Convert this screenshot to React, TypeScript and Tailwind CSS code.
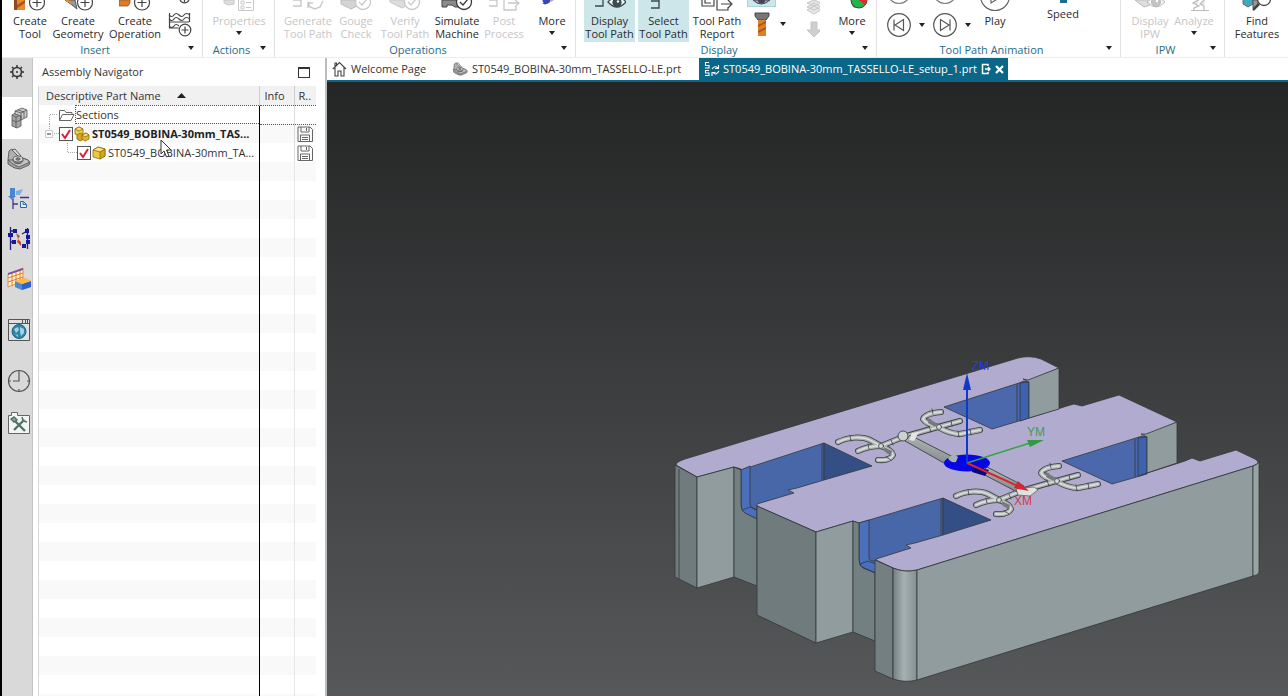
import { useState, type ReactNode } from 'react'
import clsx from 'clsx'

/* ---------- ribbon ---------- */

function Caret() {
  return (
    <svg width="6" height="4" viewBox="0 0 6 4" aria-hidden="true">
      <path d="M0 0h6L3 4z" fill="#222" />
    </svg>
  )
}

type ToolProps = {
  label: string[]
  className: string
  icon?: ReactNode
  disabled?: boolean
  active?: boolean
  caret?: boolean
}

function Tool({ label, className, icon, disabled, active, caret }: ToolProps) {
  return (
    <button
      type="button"
      disabled={disabled}
      className={clsx(
        'flex h-[42px] shrink-0 flex-col items-center text-[11px] leading-[13px] whitespace-nowrap',
        disabled ? 'text-[#c6c6c6]' : 'text-[#2b2b2b]',
        active && 'bg-[#cce6ea]',
        className,
      )}
    >
      <span className="flex h-[14px] items-start">{icon}</span>
      {label.map(l => (
        <span key={l}>{l}</span>
      ))}
      {caret && (
        <span className="flex h-[11px] items-center">
          <Caret />
        </span>
      )}
    </button>
  )
}

function Group({ title, className, children }: { title: string; className: string; children: ReactNode }) {
  return (
    <section className={clsx('flex shrink-0 flex-col border-r border-[#e2e2e2]', className)}>
      <div className="flex h-[43px] items-start">{children}</div>
      <div className="flex h-[14px] items-center">
        <span className="flex-1 text-center text-[11px] leading-[14px] text-[#1f6c86]">{title}</span>
        <button type="button" aria-label={`${title} options`} className="flex h-2 w-[14px] items-start">
          <Caret />
        </button>
      </div>
    </section>
  )
}

const PlusBadge = ({ x }: { x: number }) => (
  <g stroke="#444" fill="#fff" strokeWidth="1.2">
    <circle cx={x} cy="2.5" r="7.5" />
    <path d={`M${x - 4.5} 2.5h9M${x} -2v9`} />
  </g>
)

const CheckBadge = ({ x, color }: { x: number; color: string }) => (
  <g stroke={color} fill="#fff" strokeWidth="1.3">
    <circle cx={x} cy="2" r="7.5" />
    <path d={`M${x - 4} 2l3 3 5-6`} fill="none" />
  </g>
)

const icons = {
  createTool: (
    <svg width="32" height="12">
      <path d="M0 0h11v10H0z" fill="#e8892b" />
      <path d="M0 7l11-7v3L0 10z" fill="#a8541a" />
      <path d="M0 0h3v10H0z" fill="#8d4a1c" />
      <PlusBadge x={23} />
    </svg>
  ),
  createGeometry: (
    <svg width="32" height="12">
      <path d="M3 0h10l2 9-5-4z" fill="#999" stroke="#555" />
      <path d="M3 0h4l3 5z" fill="#e8892b" />
      <PlusBadge x={23} />
    </svg>
  ),
  createOperation: (
    <svg width="32" height="12">
      <path d="M0 0h11v3L9 6H0z" fill="#dd7a26" stroke="#8a5a30" strokeWidth=".8" />
      <PlusBadge x={23} />
    </svg>
  ),
  properties: (
    <svg width="32" height="12" fill="none" stroke="#c8c8c8">
      <path d="M1 0v3l4 2 6-1V0z" fill="#ddd" />
      <path d="M15.500 0v10.500h15V0M18 1h3v3h-3zM18 6h3v3h-3zM23 2.500h5M23 7.500h5" />
    </svg>
  ),
  generate: (
    <svg width="32" height="12" fill="none" stroke="#c8c8c8" strokeWidth="1.400">
      <path d="M1 0h8v6H1M16 2l2 5 5 2 5-2 3-6M16 8V3h5" />
    </svg>
  ),
  gouge: (
    <svg width="32" height="12">
      <path d="M1 0v4l10 5 6-3V0z" fill="#d4d4d4" stroke="#bbb" />
      <CheckBadge x={23} color="#c8c8c8" />
    </svg>
  ),
  verify: (
    <svg width="32" height="12">
      <path d="M1 0v2l12 6 6-3V0z" fill="#ddd" stroke="#c8c8c8" />
      <CheckBadge x={23} color="#c8c8c8" />
    </svg>
  ),
  simulate: (
    <svg width="32" height="12">
      <path d="M1 0v7h5V5h5l3 2h5V0z" fill="#8c8c8c" stroke="#444" />
      <CheckBadge x={23} color="#3a3a3a" />
    </svg>
  ),
  post: (
    <svg width="32" height="12" fill="none" stroke="#c8c8c8" strokeWidth="1.300">
      <path d="M1 0h8v6H1M16 0v10h12V7M20 3h10M27 0l4 3-4 4" />
    </svg>
  ),
  wrench: (
    <svg width="32" height="14">
      <path d="M12 -2v3l-2 2H6l3 1.500 4-1.500 3-4z" fill="#2c3da8" />
      <circle cx="10" cy="0" r="3.500" fill="#3949b4" />
      <path d="M13 -1l8-1-6 4z" fill="#aab" />
    </svg>
  ),
  displayPath: (
    <svg width="32" height="12" fill="none" stroke="#3c4a50" strokeWidth="1.300">
      <path d="M1 -1h8v7H1" />
      <path d="M14 2q9-10 18 0q-9 10-18 0z" fill="#eef7f8" />
      <circle cx="23" cy="2.500" r="4" fill="#3c4a50" />
      <circle cx="24" cy="1.500" r="1.200" fill="#fff" stroke="none" />
    </svg>
  ),
  selectPath: (
    <svg width="32" height="12" fill="none" stroke="#3c4a50" strokeWidth="1.400">
      <path d="M11 -1v2H3M3 1h8v7H3" />
    </svg>
  ),
  report: (
    <svg width="32" height="12" fill="none" stroke="#444" strokeWidth="1.200">
      <path d="M1 0v6h12V0M4 0v3h6M16 0v10h11V7M20 4h10M27 0l4 4-4 4" />
    </svg>
  ),
  pie: (
    <svg width="32" height="14">
      <path d="M23 0L15 1a8.200 8.200 0 0 0 4 7z" fill="#3a4a50" />
      <circle cx="23" cy="0" r="8" fill="#24b24a" stroke="#444" />
      <path d="M23 0v-8h8q2 6-2 13z" fill="#e22c2c" />
    </svg>
  ),
  play: (
    <svg width="32" height="12" fill="none" stroke="#666" strokeWidth="1.200">
      <circle cx="16" cy="-4" r="14.500" />
      <path d="M12 -6v9l11-7" />
    </svg>
  ),
  ipw: (
    <svg width="32" height="12" stroke="#bbb" fill="none">
      <path d="M1 0l9 7 6-2V0z" fill="#ddd" />
      <path d="M13 2q9-9 18 0q-9 10-18 0z" fill="#f4f4f4" />
      <circle cx="22" cy="2" r="4.500" fill="#c4c4c4" />
      <circle cx="23" cy="1" r="1.200" fill="#fff" stroke="none" />
    </svg>
  ),
  analyze: (
    <svg width="32" height="12" stroke="#bbb" fill="#e6e6e6" strokeWidth="1.200">
      <path d="M13 10.500h18M16 10V8l5-2-6-3 7-4M26 10V6l-4-2 5-5" />
    </svg>
  ),
  find: (
    <svg width="32" height="12">
      <path d="M2 -2v6l5 3 5-3v-6z" fill="#41a9bd" stroke="#667" />
      <path d="M12 0v8l5-2V0z" fill="#999" stroke="#555" />
      <path d="M18 4l-6 6" stroke="#444" strokeWidth="2.500" />
      <circle cx="23" cy="-1" r="6.500" fill="#fff" stroke="#444" strokeWidth="1.300" />
    </svg>
  ),
}

function StepButton({ forward }: { forward?: boolean }) {
  return (
    <div className="flex w-[46px] flex-col">
      <svg width="24" height="5" fill="none" stroke="#777" strokeWidth="1.200" aria-hidden="true">
        <circle cx="12" cy="-8" r="11.500" />
      </svg>
      <div className="mt-2 flex items-center">
        <button type="button" aria-label={forward ? 'Step forward' : 'Step backward'}>
          <svg width="24" height="24" fill="none" stroke="#555" strokeWidth="1.200" className={forward ? '' : 'rotate-180'}>
            <circle cx="12" cy="12" r="11.300" />
            <path d="M7.500 6.500v11l8.500-5.500zM17 6.500v11" />
          </svg>
        </button>
        <button type="button" aria-label="Step options" className="flex w-[22px] justify-center">
          <Caret />
        </button>
      </div>
    </div>
  )
}

function Ribbon() {
  return (
    <header className="flex h-[58px] shrink-0 overflow-hidden border-b border-[#ececec] bg-white">
      <Group title="Insert" className="w-[201px]">
        <Tool className="ml-2 w-10" label={['Create', 'Tool']} icon={icons.createTool} />
        <Tool className="w-14" label={['Create', 'Geometry']} icon={icons.createGeometry} />
        <Tool className="w-[58px]" label={['Create', 'Operation']} icon={icons.createOperation} />
        <button type="button" aria-label="Create method" className="ml-1">
          <svg width="24" height="38" fill="none" stroke="#444" strokeWidth="1.200">
            <path d="M12 0a5 5 0 0 0 9 0M16.500 0v2" />
            <path d="M1.500 13v9M21.500 13v9M1 15q3 3 5 0t5 0t5 0t6 0M1 19q3 3 5 0t5 0t5 0t6 0M1 22h20M1.500 22v6h9M1 26q3 3 5 0t5 0" />
            <circle cx="17" cy="30" r="5.800" fill="#fff" />
            <path d="M13.500 30h7M17 26.500v7" />
          </svg>
        </button>
      </Group>
      <Group title="Actions" className="w-[72px]">
        <Tool className="w-[72px]" label={['Properties']} icon={icons.properties} disabled caret />
      </Group>
      <Group title="Operations" className="w-[301px]">
        <Tool className="ml-[9px] w-12" label={['Generate', 'Tool Path']} icon={icons.generate} disabled />
        <Tool className="w-12" label={['Gouge', 'Check']} icon={icons.gouge} disabled />
        <Tool className="w-[50px]" label={['Verify', 'Tool Path']} icon={icons.verify} disabled />
        <Tool className="w-[54px]" label={['Simulate', 'Machine']} icon={icons.simulate} />
        <Tool className="w-10" label={['Post', 'Process']} icon={icons.post} disabled />
        <Tool className="ml-1 w-12" label={['More']} icon={icons.wrench} caret />
      </Group>
      <Group title="Display" className="w-[301px]">
        <Tool className="ml-2 w-[51px]" label={['Display', 'Tool Path']} icon={icons.displayPath} active />
        <Tool className="ml-[3px] w-[51px]" label={['Select', 'Tool Path']} icon={icons.selectPath} active />
        <Tool className="ml-[3px] w-[50px]" label={['Tool Path', 'Report']} icon={icons.report} />
        <div className="ml-[5px] flex flex-col items-center">
          <button type="button" aria-label="Show tool" className="h-[7px] w-[29px] border border-t-0 border-[#a8d4dc] bg-[#cce6ea]">
            <svg width="27" height="6">
              <path d="M5 0q8 8 17 0z" fill="#9aa7b0" stroke="#445" />
              <circle cx="13.500" cy="0" r="3.500" fill="#445" />
            </svg>
          </button>
          <button type="button" aria-label="Tool display" className="mt-[5px]">
            <svg width="16" height="25">
              <path d="M1 1h14v3l-3 4H4L1 4z" fill="#777" stroke="#444" />
              <path d="M4 8h8v16H4z" fill="#e07f22" />
              <path d="M4 13l8-4v2l-8 4zM4 19l8-4v2l-8 4z" fill="#a5561a" />
            </svg>
          </button>
        </div>
        <button type="button" aria-label="Tool display options" className="mt-[22px] ml-1">
          <Caret />
        </button>
        <svg width="16" height="38" className="ml-5" fill="#e6e6e6" stroke="#c6c6c6" aria-hidden="true">
          <path d="M1 10l7 4 7-4-7-4zM1 7l7 3 7-3-7-4zM1 3l7 3 7-3-7-3z" />
          <path d="M5 22h6v8h4l-7 7-7-7h4z" fill="#cfcfcf" />
        </svg>
        <Tool className="ml-2 w-12" label={['More']} icon={icons.pie} caret />
      </Group>
      <Group title="Tool Path Animation" className="w-[244px]">
        <div className="ml-[10px] flex">
          <StepButton />
          <StepButton forward />
        </div>
        <Tool className="w-8" label={['Play']} icon={icons.play} />
        <div className="ml-8 flex w-10 flex-col items-center text-[11px] leading-[13px] text-[#2b2b2b]">
          <span className="mb-1 h-[3px] w-[7px] bg-[#1c6f8c]" />
          <span>Speed</span>
        </div>
      </Group>
      <Group title="IPW" className="w-[104px]">
        <Tool className="ml-[9px] w-10" label={['Display', 'IPW']} icon={icons.ipw} disabled />
        <Tool className="w-12" label={['Analyze']} icon={icons.analyze} disabled caret />
      </Group>
      <div className="flex flex-1 pl-2">
        <Tool className="w-12" label={['Find', 'Features']} icon={icons.find} />
      </div>
    </header>
  )
}

/* ---------- resource bar ---------- */

function PartIcon({ width, height }: { width: number; height: number }) {
  return (
    <svg width={width} height={height} viewBox="0 0 24 22" stroke="#555" strokeWidth=".9" strokeLinejoin="round">
      <path d="M1 12l9-4 11 4q3 2 1 5l-9 4q-6 0-12-5z" fill="#a2a2a2" />
      <path d="M1 12l9-4 11 4q2 2 0 3l-9 4q-6-2-11-7z" fill="#c4c4c4" />
      <path d="M1 12l1-9q2-3 5-1l6 7-4 3z" fill="#b0b0b0" />
      <path d="M5 2l3-1 6 7-2 1z" fill="#d6d6d6" />
      <ellipse cx="11" cy="12.500" rx="5" ry="3.200" fill="#8f8f8f" />
      <ellipse cx="11" cy="11" rx="5" ry="3" fill="#dedede" />
      <ellipse cx="11" cy="11" rx="2.200" ry="1.200" fill="#888" />
    </svg>
  )
}

const resources = [
  {
    name: 'Settings',
    className: 'h-[39px] pr-1 pb-3',
    icon: (
      <svg width="14" height="14" fill="none" stroke="#333">
        <circle cx="7" cy="7" r="4.500" strokeWidth="1.600" />
        <circle cx="7" cy="7" r="1" fill="#333" stroke="none" />
        <path d="M7 0v2M7 12v2M0 7h2M12 7h2M2 2l1.500 1.500M10.500 10.500L12 12M2 12l1.500-1.500M10.500 3.500L12 2" strokeWidth="1.500" />
      </svg>
    ),
  },
  {
    name: 'Assembly Navigator',
    className: 'h-[42px] bg-white',
    icon: (
      <svg width="18" height="22" stroke="#555" strokeWidth=".8" strokeLinejoin="round">
        <path d="M2 8l5-3 4 2v12l-4 2-5-2z" fill="#a5a5a5" />
        <path d="M2 8l4 2v11M2 13l4 2 5-2M6 10l5-2" fill="none" />
        <path d="M5 4l7-3 5 2v7l-6 3V9L5 7z" fill="#c9c9c9" />
        <path d="M5 4l6 2 6-3M11 6v7M8 3l6 2v6" fill="none" />
      </svg>
    ),
  },
  {
    name: 'Part Navigator',
    className: 'h-10',
    icon: <PartIcon width={24} height={22} />,
  },
  {
    name: 'Operation Navigator',
    className: 'h-10',
    icon: (
      <svg width="22" height="24">
        <path d="M2 1h5v8h1l-4 4-4-4h2z" fill="#4a86d0" />
        <path d="M8 4l7-2-3 6H8z" fill="#7fb0e4" />
        <path d="M5 12v10M5 17h5M12 10.500h9" stroke="#46308f" strokeWidth="1.300" fill="none" />
        <path d="M12.500 14.500h3l3 3v3h-6zM15 14.500v3h3" fill="#e8f0fa" stroke="#3066b0" />
      </svg>
    ),
  },
  {
    name: 'Machine Tool Navigator',
    className: 'h-10',
    icon: (
      <svg width="24" height="24">
        <path d="M3.500 0v23M3.500 4h5M3.500 15h5M20.500 1v21M15 7l5-3" stroke="#20207c" strokeWidth="1.300" />
        <path d="M1 6h5v4H1zM6 2h4v4H6zM5 13h4v4H5zM18 2h4v4h-4zM19 8h4v4h-4zM15 17h4v4h-4zM19 13h4v4h-4z" fill="#17179c" />
        <path d="M9 6l4 3-2 3zM11 12l3 3v4l-4-4z" fill="#c84a2c" />
      </svg>
    ),
  },
  {
    name: 'Tool Library',
    className: 'h-10',
    icon: (
      <svg width="24" height="24">
        <path d="M1 7l15-6v13L1 20z" fill="#fff2dc" stroke="#e09040" />
        <path d="M1 11l15-5M1 15l15-5M5 6v13M9 4v13M13 3v12" stroke="#e07c28" />
        <path d="M1 6l15-5v2L1 8z" fill="#7d50a8" />
        <path d="M8 14l10-3 6 3v6l-9 3-7-3z" fill="#f2a22c" />
        <path d="M8 14l7 3v6l-7-3z" fill="#4c8bd0" />
        <path d="M15 17l9-3v6l-9 3z" fill="#2b62cc" />
        <path d="M8 14l10-3 6 3-9 3z" fill="#ffb94a" />
      </svg>
    ),
  },
  {
    name: 'Web Browser',
    className: 'mt-1.5 h-[50px]',
    icon: (
      <svg width="24" height="24" fill="none" stroke="#555">
        <path d="M1.500 1.500h21v21h-21z" fill="#e0e0e0" />
        <path d="M1.500 5.500h21M15.500 2v3M18.500 2v3M20.500 2v3" />
        <circle cx="12" cy="13.500" r="7" fill="#2d86a6" stroke="#1f6680" />
        <path d="M7 11l4-2 1 3-3 3zM13 9l4 2v4l-3 3-1-4zM8 16l3 1v2z" fill="#9fd3e2" stroke="none" />
      </svg>
    ),
  },
  {
    name: 'History',
    className: 'h-[52px]',
    icon: (
      <svg width="24" height="24" fill="none" stroke="#555" strokeWidth="1.200">
        <circle cx="12" cy="12" r="10.500" />
        <path d="M12 3v9H6M12 20v2M2 12h2M20 12h2M12 1.500v2" />
      </svg>
    ),
  },
  {
    name: 'Roles',
    className: 'h-8',
    icon: (
      <svg width="24" height="24">
        <path d="M1.500 22.500v-18h3v-3h6v3h12v18z" fill="#f4f4f4" stroke="#666" />
        <path d="M7 19l9-9M8 10l10 10" stroke="#4d7368" strokeWidth="2.400" />
        <path d="M15 6l1 4 4 1M4 8l3-2 3 3-3 2z" stroke="#4d7368" strokeWidth="1.400" fill="#8ba89f" />
      </svg>
    ),
  },
]

function ResourceBar() {
  return (
    <nav className="flex w-[31px] shrink-0 flex-col border-r border-[#c4c4c4] bg-[#d9d9d9]">
      {resources.map(r => (
        <button key={r.name} type="button" aria-label={r.name} className={clsx('flex w-full shrink-0 items-center justify-center pl-[3px]', r.className)}>
          <span className="shrink-0">{r.icon}</span>
        </button>
      ))}
    </nav>
  )
}

/* ---------- assembly navigator ---------- */

function SaveIcon() {
  return (
    <svg width="16" height="16" fill="none" stroke="#666" className="mx-auto" aria-label="Modified">
      <path d="M1 1h12l2.500 2.500v12H1zM4 1v5h8V1M9.500 2v3M3.500 15V9h9v6M5 11.500h6M5 13.500h6" />
    </svg>
  )
}

function PartCheck({ label }: { label: string }) {
  const [checked, setChecked] = useState(true)
  return (
    <span className="relative flex size-[14px] shrink-0">
      <input
        type="checkbox"
        aria-label={label}
        checked={checked}
        onChange={e => setChecked(e.target.checked)}
        className="size-[14px] appearance-none border border-[#555] bg-white"
      />
      {checked && (
        <svg width="14" height="14" className="pointer-events-none absolute inset-0" fill="none" stroke="#dc1f3c" strokeWidth="2">
          <path d="M3 7l3 4 5-8" />
        </svg>
      )}
    </span>
  )
}

const fillerRows = Array.from({ length: 29 }, (_, i) => i)

function AssemblyNavigator() {
  return (
    <aside className="flex w-[292px] shrink-0 flex-col overflow-hidden bg-white pr-[9px] pl-[5px]">
      <div className="flex h-7 shrink-0 items-center justify-between pr-[6px] pl-1">
        <h2 className="text-[11px] text-[#333]">Assembly Navigator</h2>
        <button type="button" aria-label="Maximize" className="h-[11px] w-3 border border-t-2 border-[#333]" />
      </div>
      <div className="min-h-0 flex-1 overflow-hidden border-l border-[#d8d8d8]">
        <table className="w-full table-fixed border-collapse text-[11px] leading-[13px] text-[#333]">
          <colgroup>
            <col />
            <col className="w-[35px]" />
            <col className="w-[22px]" />
          </colgroup>
          <thead>
            <tr className="h-[19px] bg-[#f1f1f1] text-left">
              <th className="border-r border-[#cfcfcf] p-0 pl-[7px] font-normal">
                <span className="flex items-center gap-4">
                  Descriptive Part Name
                  <svg width="9" height="5"><path d="M4.500 0L9 5H0z" fill="#222" /></svg>
                </span>
              </th>
              <th className="border-r border-[#cfcfcf] p-0 pr-1 text-center font-normal">Info</th>
              <th className="p-0 pl-1 font-normal whitespace-nowrap">R..</th>
            </tr>
          </thead>
          <tbody>
            <tr className="h-[19px]">
              <td className="border-r border-black p-0">
                <div className="flex h-[19px] items-center">
                  <svg width="19" height="19" className="shrink-0" stroke="#aaa" strokeDasharray="1 1"><path d="M10.500 19V9.500H19" fill="none" /></svg>
                  <svg width="17" height="14" className="shrink-0" fill="#fff" stroke="#666"><path d="M1.500 12.500v-10h5l1.500 2h6v2M1.500 12.500l3-6h11.500l-3 6z" /></svg>
                  <span className="flex h-[19px] flex-1 items-center border border-r-0 border-dotted border-[#555]">Sections</span>
                </div>
              </td>
              <td className="border-y border-r border-y-[#555] border-r-[#ddd] p-0 [border-top-style:dotted] [border-bottom-style:dotted]" />
              <td className="border-y border-dotted border-[#555] p-0" />
            </tr>
            <tr className="h-[19px] bg-[#f9f9f9]">
              <td className="border-r border-black p-0">
                <div className="flex h-[19px] items-center">
                  <svg width="20" height="19" className="shrink-0" fill="none" stroke="#aaa">
                    <path d="M10.500 0v5M15 9.500h5" strokeDasharray="1 1" />
                    <path d="M6.500 6.500h7v7h-7z" fill="#fff" stroke="#ccc" /><path d="M8 10h4" stroke="#333" />
                  </svg>
                  <PartCheck label="ST0549_BOBINA-30mm_TASSELLO-LE_setup_1" />
                  <svg width="16" height="16" className="mx-px shrink-0" stroke="#8a6a10" strokeWidth=".8" strokeLinejoin="round">
                    <path d="M1 3l4-2 4 2v5l-4 2-4-2z" fill="#f2cf45" /><path d="M3 9l3-2 4 2v4l-4 2-3-2z" fill="#d9a31e" /><path d="M8 9l4-2 3 2v4l-4 2-3-2z" fill="#e9b52c" /><path d="M8 9l4-2 3 2-4 2zM1 3l4-2 4 2-4 2z" fill="#fae27a" />
                  </svg>
                  <span className="pl-px font-bold whitespace-nowrap text-[#222]">ST0549_BOBINA-30mm_TAS...</span>
                </div>
              </td>
              <td className="border-r border-[#ddd] p-0" />
              <td className="p-0"><SaveIcon /></td>
            </tr>
            <tr className="h-[19px]">
              <td className="border-r border-black p-0">
                <div className="flex h-[19px] items-center">
                  <svg width="38" height="19" className="shrink-0" fill="none" stroke="#aaa" strokeDasharray="1 1"><path d="M28.500 0v9.500H38" /></svg>
                  <PartCheck label="ST0549_BOBINA-30mm_TASSELLO-LE" />
                  <svg width="14" height="14" className="mx-px shrink-0" stroke="#8a6a10" strokeWidth=".8" strokeLinejoin="round">
                    <path d="M1 4l5-3 7 2v7l-5 3-7-2z" fill="#f0c83c" /><path d="M8 6l5-3v7l-5 3z" fill="#d9a31e" /><path d="M1 4l5-3 7 2-5 3z" fill="#fae27a" />
                  </svg>
                  <span className="pl-px whitespace-nowrap">ST0549_BOBINA-30mm_TA...</span>
                </div>
              </td>
              <td className="border-r border-[#ddd] p-0" />
              <td className="p-0"><SaveIcon /></td>
            </tr>
            {fillerRows.map(i => (
              <tr key={i} className="h-[19px] odd:bg-white even:bg-[#f9f9f9]">
                <td className="border-r border-black p-0" />
                <td className="border-r border-[#e6e6e6] p-0" />
                <td className="p-0" />
              </tr>
            ))}
          </tbody>
        </table>
      </div>
    </aside>
  )
}

/* ---------- document tabs ---------- */

function DocumentTabs() {
  return (
    <div role="tablist" className="flex h-6 shrink-0 items-stretch border-b-2 border-[#0a6788] bg-white text-[11px] text-[#333]">
      <button type="button" role="tab" className="flex w-[126px] items-center gap-1 pl-[5px] whitespace-nowrap">
        <svg width="15" height="16" fill="none" stroke="#444" strokeWidth="1.100">
          <path d="M.8 8L7.500 1.500 14 8M3 6.500v8.500h3v-5h3v5h3V6.500M3 5V2h1.500v2" />
        </svg>
        Welcome Page
      </button>
      <button type="button" role="tab" className="flex w-[246px] items-center gap-1 whitespace-nowrap">
        <PartIcon width={15} height={14} />
        ST0549_BOBINA-30mm_TASSELLO-LE.prt
      </button>
      <div role="tab" aria-selected="true" className="flex w-[309px] items-center bg-[#0a6788] pl-[5px] whitespace-nowrap text-white">
        <svg width="16" height="16" className="mr-[3px]" fill="none" stroke="#fff" strokeWidth="1.100">
          <path d="M5 1.500H1.500v3H5v2.500H1M5 9.500H1.500v2.500H5v2.500H1M8 8q3-4 6-1M14.500 4v3.500H11M15 10q-3 5-6 1.500M8 15v-3.500h3.500" />
        </svg>
        ST0549_BOBINA-30mm_TASSELLO-LE_setup_1.prt
        <svg width="10" height="12" className="ml-1" fill="none" stroke="#fff" strokeWidth="1.500">
          <path d="M7 3V1.500H1.500v9H7V9M4 6h5M7 4l2 2-2 2" />
        </svg>
        <button type="button" aria-label="Close tab" className="ml-1">
          <svg width="9" height="9" stroke="#fff" strokeWidth="2.200"><path d="M1 1l7 7M8 1L1 8" /></svg>
        </button>
      </div>
    </div>
  )
}

/* ---------- 3D scene ---------- */

const RUNNERS = [
  'M838 442C848 437 862 436 870 440L881 446',
  'M858 451Q868 446 881 446',
  'M878 460Q890 461 893 455Q892 450 881 446',
  'M941 412Q926 413 923 419Q926 424 938 427',
  'M960 421L938 427',
  'M938 427Q950 434 960 434L980 430',
  'M881 446L903 437L938 427',
]

function RunnerCluster({ transform }: { transform?: string }) {
  return (
    <g transform={transform} fill="none" strokeLinecap="round" strokeLinejoin="round">
      {RUNNERS.map(d => <path key={d} d={d} stroke="#3d4244" strokeWidth="6" />)}
      {RUNNERS.map(d => <path key={d} d={d} stroke="#a9afae" strokeWidth="4.400" />)}
      {RUNNERS.map(d => <path key={d} d={d} stroke="#d8dcda" strokeWidth="1.800" />)}
      <path d="M850 436l1 5M868 444l1 5M886 457l5 3M932 409l1 5M926 418l5 2M951 421l1 5M958 431l1 6M970 429l1 6M929 426l2 6M891 440l2 5" stroke="#3d4244" strokeWidth=".8" />
      <path d="M884 447l8 4-1 5-7-5zM929 419l9 5-3 3-7-4z" fill="#757b7c" />
      <circle cx="881" cy="446" r="2.500" fill="#d5d9d7" stroke="#3d4244" strokeWidth=".8" />
      <circle cx="939" cy="427" r="2.500" fill="#d5d9d7" stroke="#3d4244" strokeWidth=".8" />
    </g>
  )
}

function Scene() {
  return (
    <svg viewBox="327 82 961 614" preserveAspectRatio="xMaxYMax meet" className="size-full" role="img" aria-label="Part model">
      <defs>
        <linearGradient id="corner" x1="0" x2="1">
          <stop offset="0" stopColor="#727e80" />
          <stop offset=".45" stopColor="#a6b1b1" />
          <stop offset="1" stopColor="#84908f" />
        </linearGradient>
        <linearGradient id="shaft" x1="0" y1="1" x2=".4" y2="0">
          <stop offset="0" stopColor="#6f7676" />
          <stop offset="1" stopColor="#b4bab8" />
        </linearGradient>
      </defs>

      <g stroke="#32373c" strokeWidth=".8" strokeLinejoin="round">
        {/* top face */}
        <path
          d="M676 465Q676 462 685 459L1018 358Q1030 355 1041 359L1059 368 1029 381V418L1067 406 1074 404 1082 406 1119 395 1177 422 1147 436V473L1185 461 1192 458 1200 461 1236 450 1255 459Q1262 463 1253 466L917 570Q905 573 893 568L876 560 859 523 853 521 816 532 757 506 741 469 734 467 697 477Z"
          fill="#b0abcf"
        />

        {/* right-hand pockets */}
        <path d="M944 407L1019 383 1024 381 1029 382V418L992 429z" fill="#4a68ab" />
        <path d="M1020 383v38l9-3v-36z" fill="#3f62b0" />
        <path d="M1017 384v37" />
        <path d="M1062 461L1136 438 1142 436 1147 437V474L1112 484z" fill="#4a68ab" />
        <path d="M1138 438v38l9-3v-36z" fill="#3f62b0" />
        <path d="M1135 439v38" />
        <path d="M1029 382l-6-3 5 1 31-12v41l-30 9z" fill="#909c9d" />
        <path d="M1147 437l-6-3 5 0 31-12v41l-30 10z" fill="#909c9d" />

        {/* left-hand pockets */}
        <path d="M741 470L824 443V480L797 488 788 490 794 493 757 504V519L744 513Q741 510 741 505z" fill="#4867a9" />
        <path d="M824 443L872 466 824 480z" fill="#344e86" />
        <path d="M741 470l9-4v38q1 5 7 6v9l-13-6q-3-3-3-8z" fill="#4a6fbd" />
        <path d="M742 510l8-3 7 3M822 444v36" fill="none" />
        <path d="M859 523L943 498V535L915 543 906 545 911 548 876 559V573L862 567Q859 564 859 560z" fill="#4867a9" />
        <path d="M943 498L991 520 943 535z" fill="#344e86" />
        <path d="M859 523l10-3v37q0 5 7 4v12l-14-6q-3-3-3-7z" fill="#4a6fbd" />
        <path d="M860 564l8-3 8 3M941 499v36" fill="none" />

        {/* back block */}
        <path d="M675 465L697 477V588L675 577z" fill="#6f7b7d" />
        <path d="M697 477L734 467V577L697 588z" fill="#909c9d" />
        <path d="M734 467L741 470V505Q741 511 745 513L757 519V586L734 577z" fill="#738082" />
        <path d="M679 469v110" />

        {/* middle block */}
        <path d="M757 506L816 532V643L757 615z" fill="#6f7b7d" />
        <path d="M816 532L853 521V632L816 643z" fill="#909c9d" />
        <path d="M853 521L859 523V560Q859 566 863 568L875 573V641L853 632z" fill="#738082" />

        {/* front block */}
        <path d="M875 560L893 568V679L875 671z" fill="#737f81" />
        <path d="M893 568Q905 573 917 570V680Q905 683 893 679z" fill="url(#corner)" />
        <path d="M917 570L1253 466V576L917 680z" fill="#909c9d" />
        <path d="M1253 466Q1259 464 1259 461V572Q1259 575 1253 576z" fill="#98a3a3" />
      </g>

      <RunnerCluster />
      <RunnerCluster transform="translate(118 54)" />
      <path d="M905 441l5-6 47 24-6 8z" fill="url(#shaft)" stroke="#3d4244" strokeWidth=".9" />
      <circle cx="903" cy="436" r="5" fill="#cdd1cf" stroke="#3d4244" strokeWidth=".9" />
      <path d="M909 440l3-7 7-1-5 9z" fill="#e2e5e3" />
      <path d="M981 473l6-6 37 19-5 7z" fill="url(#shaft)" stroke="#3d4244" strokeWidth=".9" />
      <path d="M1016 489l18-2 4 3-8 6-12-1z" fill="#dfe2e0" stroke="#3d4244" strokeWidth=".6" />

      {/* machine coordinate system */}
      <ellipse cx="967" cy="463" rx="23" ry="8.500" fill="#0505e6" />
      <path d="M973 466l16 4-4 6-13-4z" fill="#06067e" />
      <path d="M948 458q2 5 8 4l2-5-4-3z" fill="#a9b0b0" />
      <g strokeWidth="1.500">
        <path d="M967 463V388" stroke="#1238c8" strokeWidth="2" />
        <path d="M967 373l4 17h-8z" fill="#1238c8" />
        <path d="M967 463L1030 443" stroke="#33a344" />
        <path d="M1044 440l-17 0 3 7z" fill="#2f9c3f" />
        <path d="M967 463L1018 486" stroke="#d8242c" strokeWidth="2" />
        <path d="M1029 491l-11-10-4 7z" fill="#d8242c" />
      </g>
      <g className="font-['Liberation_Sans',sans-serif] text-[12px]">
        <text x="972" y="370" fill="#1a3df0">ZM</text>
        <text x="1027" y="436" fill="#3f9c54">YM</text>
        <text x="1014" y="505" fill="#d33a48">XM</text>
      </g>
    </svg>
  )
}

export default function App() {
  return (
    <div className="relative flex h-screen flex-col overflow-hidden border-l-2 border-black bg-white font-['Open_Sans','Noto_Sans',sans-serif]">
      <Ribbon />
      <div className="flex min-h-0 flex-1">
        <ResourceBar />
        <AssemblyNavigator />
        <main className="flex min-w-0 flex-1 flex-col border-l-2 border-[#bdbdbd]">
          <DocumentTabs />
          <div className="min-h-0 flex-1 bg-linear-to-b from-[#242525] to-[#57585a]">
            <Scene />
          </div>
        </main>
      </div>
      {/* mouse pointer */}
      <svg width="14" height="20" className="pointer-events-none absolute top-[139px] left-[158px]" fill="#fff" stroke="#333" aria-hidden="true">
        <path d="M1 1v14l3-3 2.500 6 2.500-1-2.500-6H11z" />
      </svg>
    </div>
  )
}
